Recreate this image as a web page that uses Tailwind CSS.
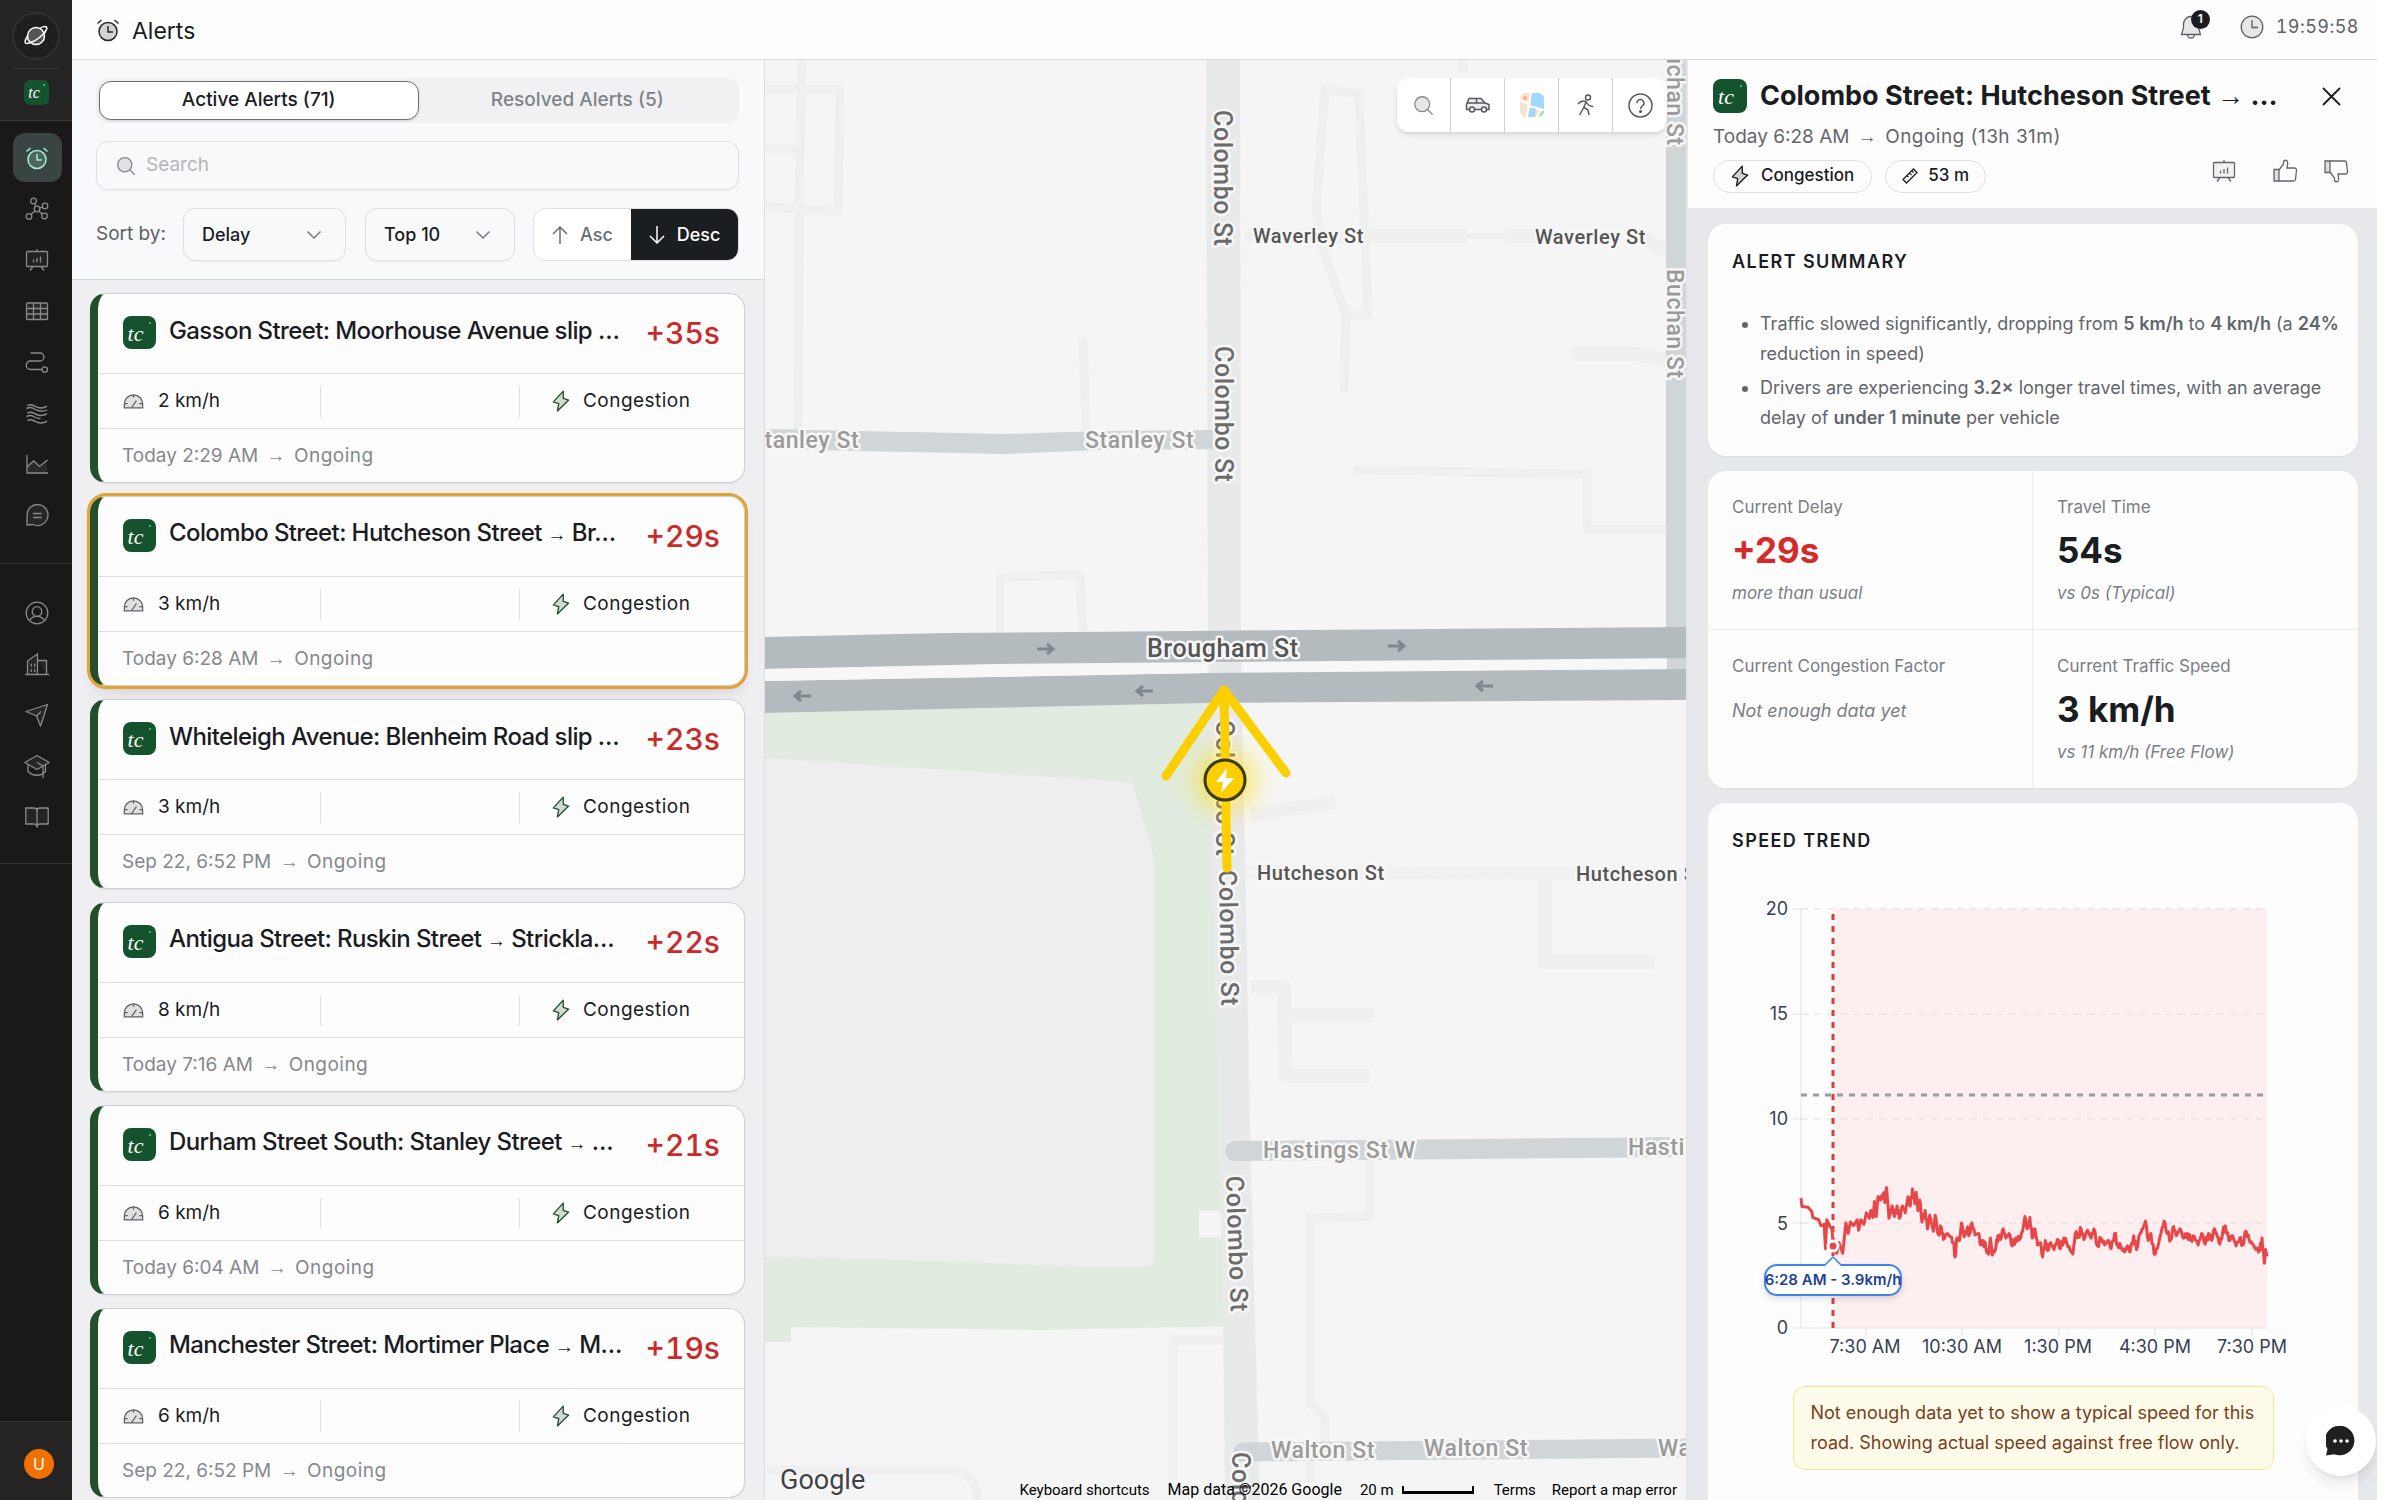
<!DOCTYPE html>
<html lang="en">
<head>
<meta charset="utf-8">
<title>Alerts</title>
<script src="https://cdn.jsdelivr.net/npm/@tailwindcss/browser@4"></script>
</head>
<body class="h-screen overflow-hidden bg-white pr-[23px] font-['Inter',sans-serif] text-[19px] text-[#1a1c1f]">

<!-- shared icon symbols -->
<svg class="hidden" aria-hidden="true">
  <symbol id="i-alarm" viewBox="0 0 24 24"><circle cx="12" cy="13.5" r="9" fill="currentColor" fill-opacity=".2"/><path d="M12 8v6h5M1.5 5.5 5.5 2M22.5 5.5 18.500 2"/></symbol>
  <symbol id="i-board" viewBox="0 0 24 24"><rect x="1.500" y="3.500" width="21" height="15" rx="1" fill="currentColor" fill-opacity=".08"/><path d="M12 3.500V1M8 18.500l-3 4M16 18.500l3 4M8.500 14.500v-3M12 14.500V10M15.500 14.500v-6"/></symbol>
  <symbol id="i-gauge" viewBox="0 0 24 18"><path d="M1 16.500V12a11 11 0 0 1 22 0v4.500z" fill="currentColor" fill-opacity=".18"/><path d="M9.500 16.500l6-8.500M12 1v3.500M1.500 11.500H5M19 11.500h3.500"/></symbol>
  <symbol id="i-bolt" viewBox="0 0 20 24"><path d="M12.500 1 1.500 13l6 2-1.500 8L18.500 11l-6-2z" fill="currentColor" fill-opacity=".2" stroke-linejoin="round"/></symbol>
  <symbol id="i-search" viewBox="0 0 24 24"><circle cx="10.500" cy="10.500" r="8.500" fill="currentColor" fill-opacity=".2"/><path d="M16.500 16.500 22.500 22.500"/></symbol>
  <symbol id="i-chev" viewBox="0 0 16 10"><path d="M1.500 1.500 8 8l6.500-6.500"/></symbol>
  <symbol id="i-thumb" viewBox="0 0 26 24"><path d="M2 10.500h5V22H2z" fill="currentColor" fill-opacity=".2"/><path d="M7 11l4.500-6V3.500a2 2 0 0 1 4-.5c.5 2 0 4-.5 6h7.500a2 2 0 0 1 2 2.200l-1 9A2 2 0 0 1 21.500 22H7"/></symbol>
</svg>

<div class="flex h-full">

  <!-- sidebar -->
  <nav aria-label="Main" class="flex w-[72px] shrink-0 flex-col bg-[#191919] text-[#8a8a8a]">
    <div class="flex h-[121px] flex-col items-center border-b border-[#383838] bg-[#242424] pt-3">
      <a href="#" aria-label="Home" class="flex size-12 items-center justify-center rounded-full border-2 border-[#303030] bg-[#1f1f1f] text-white">
        <svg class="size-6" viewBox="0 0 24 24" fill="none" stroke="currentColor" stroke-width="1.500"><circle cx="12" cy="12" r="8.500" fill="#555"/><path d="M4 11.500C1.500 15 .5 17.500 1.500 19c2 1.500 9-1.500 14-5.500s8-8.500 7-10.500c-1-1-4-.5-6.500 1.500"/></svg>
      </a>
      <div class="mt-2 h-px w-11 bg-[#383838]"></div>
      <a href="#" aria-label="Workspace" class="relative mt-[11px] flex size-[25px] items-center justify-center rounded-md bg-[#14532d] pr-1 font-['Liberation_Serif',serif] text-[16px] leading-none text-white italic">tc<span class="absolute top-1 right-1 size-[2px] rounded-full bg-[#4ade80]"></span></a>
    </div>

    <div class="flex flex-col items-center gap-[2px] border-b border-[#333] pt-3 pb-6 pl-[2px]">
      <a href="#" aria-label="Alerts" class="flex size-[49px] items-center justify-center rounded-xl bg-[#3a4543] text-[#a3ecd2]"><svg class="size-6" fill="none" stroke="currentColor" stroke-width="1.500"><use href="#i-alarm"/></svg></a>
      <a href="#" aria-label="Network" class="flex size-[49px] items-center justify-center"><svg class="size-6" viewBox="0 0 24 24" fill="none" stroke="currentColor" stroke-width="1.300"><circle cx="8.500" cy="4" r="2.800"/><circle cx="20" cy="9" r="2.800"/><circle cx="19.500" cy="19" r="2.800"/><circle cx="4" cy="19.500" r="2.800"/><circle cx="12" cy="12" r="2.800"/><path d="M9.500 6.500 11 9.500M14.700 11.200l2.600-1M14 14l3.400 3.200M10 14l-4 3.500"/></svg></a>
      <a href="#" aria-label="Reports" class="flex size-[49px] items-center justify-center"><svg class="size-6" fill="none" stroke="currentColor" stroke-width="1.300"><use href="#i-board"/></svg></a>
      <a href="#" aria-label="Table" class="flex size-[49px] items-center justify-center"><svg class="size-6" viewBox="0 0 24 24" fill="none" stroke="currentColor" stroke-width="1.300"><rect x="1.500" y="4" width="21" height="16.500" rx="1" fill="currentColor" fill-opacity=".12"/><path d="M1.500 9.500h21M1.500 15h21M8.500 4v16.500M15.500 4v16.500"/></svg></a>
      <a href="#" aria-label="Routes" class="flex size-[49px] items-center justify-center"><svg class="size-6" viewBox="0 0 24 24" fill="none" stroke="currentColor" stroke-width="1.300"><path d="M5.500 3H15a4 4 0 0 1 0 8H5.500a4.200 4.200 0 0 0 0 8.500H17"/><circle cx="19.800" cy="19.500" r="2.700"/></svg></a>
      <a href="#" aria-label="Flows" class="flex size-[49px] items-center justify-center"><svg class="size-6" viewBox="0 0 24 24" fill="none" stroke="currentColor" stroke-width="1.400"><path d="M2.500 4.500c2-1 4-1 6 0s4 2.500 7 2.500 5-.500 6.500-2M1.500 7.500c2-1 5-1.500 7 0s4 2.500 7 2.500 5 0 6.500-1M2.500 12c2-1 4-1 6 0s4 2.500 7 2.500 5-.500 6.500-2M1.500 15.500c2-1 5-1.500 7 0s4 2 7 2M2.500 19.500c2-1 4-1 6 0s4 2.500 7 2.500 5-.500 6.500-2"/></svg></a>
      <a href="#" aria-label="Analytics" class="flex size-[49px] items-center justify-center"><svg class="size-6" viewBox="0 0 24 24" fill="none" stroke="currentColor" stroke-width="1.300"><path d="M2 15 9 8l6 6 7-6.500V21H2z" fill="currentColor" fill-opacity=".15" stroke="none"/><path d="M2 3v18h21M2 15 8.500 9l6 5.500L22.500 8"/></svg></a>
      <a href="#" aria-label="Messages" class="flex size-[49px] items-center justify-center"><svg class="size-6" viewBox="0 0 24 24" fill="none" stroke="currentColor" stroke-width="1.300"><path d="M2 22v-9.500a10.500 10.500 0 1 1 6 9L2 22z" fill="currentColor" fill-opacity=".12"/><path d="M8 10.500h8.500M8 14.500h8.500"/></svg></a>
    </div>

    <div class="flex flex-col items-center gap-[2px] border-b border-[#333] pt-6 pb-[22px] pl-[2px]">
      <a href="#" aria-label="Account" class="flex size-[49px] items-center justify-center"><svg class="size-6" viewBox="0 0 24 24" fill="none" stroke="currentColor" stroke-width="1.300"><circle cx="12" cy="12" r="10.800"/><circle cx="12" cy="10.500" r="4.800"/><path d="M4.500 19.500c3.500-5.500 11.500-5.500 15 0"/></svg></a>
      <a href="#" aria-label="Organisation" class="flex size-[49px] items-center justify-center"><svg class="size-6" viewBox="0 0 24 24" fill="none" stroke="currentColor" stroke-width="1.300"><path d="M0 22.500h24M2.500 22.500V9L12.500 2v20.500M12.500 8.500h9v14" fill="currentColor" fill-opacity=".12"/><path d="M6.300 11.500v3M9.700 11.500v3M6.300 17v3M9.700 17v3"/></svg></a>
      <a href="#" aria-label="Send" class="flex size-[49px] items-center justify-center"><svg class="size-6" viewBox="0 0 24 24" fill="none" stroke="currentColor" stroke-width="1.300" stroke-linejoin="round"><path d="M22.500 1.500 1 8.500 11.500 13l4 10z" fill="currentColor" fill-opacity=".12"/><path d="M11.500 13 16 8.500"/></svg></a>
      <a href="#" aria-label="Learn" class="flex size-[49px] items-center justify-center"><svg class="h-6 w-[26px]" viewBox="0 0 26 24" fill="none" stroke="currentColor" stroke-width="1.300" stroke-linejoin="round"><path d="M13 1.500 .8 8.500 13 15.500l12.200-7z" fill="currentColor" fill-opacity=".12"/><path d="M4 11v6.500c5 5 13 5 17.500 0V11M13 8.500l6 3.500v12"/></svg></a>
      <a href="#" aria-label="Docs" class="flex size-[49px] items-center justify-center"><svg class="size-6" viewBox="0 0 24 24" fill="none" stroke="currentColor" stroke-width="1.300" stroke-linejoin="round"><path d="M12 5.500C12 4 10.500 3 9 3H.8v16H9c1.500 0 3 1 3 3 0-2 1.500-3 3-3h8.200V3H15c-1.500 0-3 1-3 2.500z" fill="currentColor" fill-opacity=".1"/><path d="M12 5v17"/></svg></a>
    </div>

    <div class="mt-auto flex h-[79px] items-center justify-center border-t border-[#383838] bg-[#242424] pt-1.5 pl-1.5">
      <button type="button" aria-label="Account menu" class="size-[30px] rounded-full bg-[#f07000] text-[16px] leading-none text-white">U</button>
    </div>
  </nav>

  <div class="flex min-w-0 flex-1 flex-col">

    <!-- top bar -->
    <header class="flex h-[60px] shrink-0 items-center border-b border-[#dadada] bg-[#fefefe] pr-[18px] pl-6">
      <svg class="size-6" fill="none" stroke="#2a2a2a" stroke-width="1.500" color="#2a2a2a"><use href="#i-alarm"/></svg>
      <h1 class="ml-3 pt-0.5 text-[23px] leading-8">Alerts</h1>
      <div class="ml-auto flex items-center pb-1.5 text-[#5c6066]">
        <button type="button" aria-label="Notifications" class="relative mr-[38px]">
          <svg class="h-6 w-[22px]" viewBox="0 0 22 24" fill="none" stroke="currentColor" stroke-width="1.300"><path d="M3.500 13V9a7.500 7.500 0 0 1 15 0v4l2 6.500H1.500z" fill="currentColor" fill-opacity=".15"/><path d="M7.500 19.500a3.500 3.500 0 0 0 7 0"/></svg>
          <span class="absolute -top-[5px] left-[11px] flex size-[19px] items-center justify-center rounded-full bg-[#1a1c1f] text-[12px] font-semibold text-white">1</span>
        </button>
        <svg class="size-6" viewBox="0 0 24 24" fill="none" stroke="currentColor" stroke-width="1.300"><circle cx="12" cy="12" r="10.800" fill="currentColor" fill-opacity=".15"/><path d="M12 5v7.500h6"/></svg>
        <time class="ml-[12px] text-[18px] leading-6 tracking-wide tabular-nums">19:59:58</time>
      </div>
    </header>

    <div class="flex min-h-0 flex-1">

      <!-- alert list -->
      <section aria-label="Alerts" class="flex w-[693px] shrink-0 flex-col border-r border-[#dcdde0] bg-[#efeff1]">
        <div class="flex flex-col gap-[18px] border-b border-[#d6d7da] bg-[#f8f9fb] py-[18px] pr-[25px] pl-6">
          <div class="flex h-[45px] rounded-xl bg-[#f1f1f3] p-[3px] text-[19px] font-medium">
            <button type="button" class="flex-1 rounded-xl border border-[#6c6f74] bg-white shadow-sm">Active Alerts (71)</button>
            <button type="button" class="flex-1 text-[#7f838a]">Resolved Alerts (5)</button>
          </div>
          <label class="flex h-[49px] items-center gap-2.5 rounded-xl border border-[#dedfe3] pl-[19px] shadow-xs">
            <svg class="size-5 text-[#85888d]" fill="none" stroke="currentColor" stroke-width="1.500"><use href="#i-search"/></svg>
            <input type="search" aria-label="Search alerts" placeholder="Search" class="min-w-0 flex-1 bg-transparent outline-none placeholder:text-[#b4b6ba]">
          </label>
          <div class="flex h-[53px] items-center">
            <label for="sort" class="w-[87px] text-[#5c6066]">Sort by:</label>
            <div class="relative mr-[19px] h-full">
              <select id="sort" class="h-full w-[163px] appearance-none rounded-xl border border-[#dedfe3] bg-transparent pl-[18px] text-[18px] font-medium shadow-xs"><option>Delay</option></select>
              <svg class="pointer-events-none absolute top-[22px] right-6 h-[10px] w-4 text-[#77797d]" fill="none" stroke="currentColor" stroke-width="1.500"><use href="#i-chev"/></svg>
            </div>
            <div class="relative h-full">
              <select aria-label="Limit" class="h-full w-[150px] appearance-none rounded-xl border border-[#dedfe3] bg-transparent pl-[18px] text-[18px] font-medium shadow-xs"><option>Top 10</option></select>
              <svg class="pointer-events-none absolute top-[22px] right-6 h-[10px] w-4 text-[#77797d]" fill="none" stroke="currentColor" stroke-width="1.500"><use href="#i-chev"/></svg>
            </div>
            <div class="ml-auto flex h-full w-[206px] overflow-hidden rounded-xl border border-[#dedfe3] bg-white text-[18px] font-medium">
              <button type="button" class="flex w-[97px] items-center justify-center gap-3 text-[#6a6e74]"><svg class="h-5 w-4" viewBox="0 0 16 20" fill="none" stroke="currentColor" stroke-width="1.500"><path d="M8 19V2M1 9l7-7 7 7"/></svg>Asc</button>
              <button type="button" class="flex flex-1 items-center justify-center gap-3 bg-[#1b1e21] text-white"><svg class="h-5 w-4" viewBox="0 0 16 20" fill="none" stroke="currentColor" stroke-width="1.500"><path d="M8 1v17M1 11l7 7 7-7"/></svg>Desc</button>
            </div>
          </div>
        </div>

        <ul id="alerts" class="flex flex-col gap-[13px] overflow-hidden pt-[13px] pr-[19px] pl-[18px]"></ul>
      </section>

      <!-- map -->
      <main class="relative min-w-0 flex-1 overflow-hidden bg-[#f5f5f5]">
        <svg class="absolute inset-0 h-full w-full" viewBox="765 60 921 1440" preserveAspectRatio="xMidYMid slice" fill="none" role="img" aria-label="Street map">
          <g stroke="#efefef" stroke-width="9" stroke-linejoin="round">
            <path d="M765 89h75l-2 122-73-4M765 149h35M802 60l-3 152-1 220M1083 338l3 92M1000 635v-58l80-2 3 60"/>
            <path d="M1325 90l34 3 9 222h-22l-26-75-4-30zM1346 315l-2 78M1463 60v12"/>
            <path d="M1353 470l234 4v55h79M1370 1160v56l-60 2v184l15 16v24M1310 1462v20M1223 1340h-50v140M765 1470h185q25 0 28 30"/>
            <path d="M1245 236h222M1506 236h30M1640 236l28 16M1572 354h64l32 6M1251 815l84-13M1545 874v88h110M1251 987h33l1 89h85M1284 1015h90" stroke-width="14"/>
            <path d="M1467 236h40" stroke-width="5"/>
            <path d="M1245 872l441 2" stroke="#f1f1f1" stroke-width="13"/>
          </g>
          <path d="M765 713 1208 702 1240 1326 1042 1330 791 1327v15h-26z" fill="#e1ebe0"/>
          <path d="M765 758 L810 761 1132 782 1150 843 1154 860V1258q0 9-9 9h-61l-144-6-175-4z" fill="#eeeeee"/>
          <path d="M1199 1211h24v26h-24z" fill="#f5f5f5"/>
          <path d="M1206 60h34l1 580 2 120 4 200 2 120 4 170 5 180 2 70h-35l-2-200-6-220-4-180-5-260z" fill="#e8e9e9"/>
          <g fill="#d0d5d7">
            <path d="M1666 60h20v620h-20zM765 429l95 2 145 3 95-3 113-1v19l-113 1-95 4-145-3-95-2z"/>
            <path d="M1235 1151l451-4" stroke="#d0d5d7" stroke-width="20" stroke-linecap="round"/>
            <path d="M1243 1452l443-4" stroke="#d0d5d7" stroke-width="19" stroke-linecap="round"/>
          </g>
          <path d="M765 637l180-4 741-6v31l-690 6-231 5zM765 681l441-8 480-4v31l-480 3-441 10z" fill="#b4bbbf"/>
          <path d="M765 669l231-4 211-2v10l-442 8zM1242 663l425-4v10l-425 3z" fill="#f7f7f7"/>
          <g stroke="#7e898f" stroke-width="3">
            <path d="M1037 649h16M1047 644l6 5-6 5M1388 646h16M1398 641l6 5-6 5M811 696h-16M801 691l-6 5 6 5M1153 691h-16M1143 686l-6 5 6 5M1493 686h-16M1483 681l-6 5 6 5"/>
          </g>
          <g class="font-['Roboto',sans-serif] text-[23px] font-medium tracking-wide [paint-order:stroke]" stroke="#f7f7f7" stroke-width="5" stroke-linejoin="round" fill="#6b6b6b">
            <g class="text-[25px]">
              <text transform="translate(1214 110) rotate(90)">Colombo St</text>
              <text transform="translate(1215 346) rotate(90)">Colombo St</text>
              <text transform="translate(1216 720) rotate(90)">Colombo St</text>
              <text transform="translate(1219 870) rotate(89)">Colombo St</text>
              <text transform="translate(1226 1176) rotate(88)">Colombo St</text>
              <text transform="translate(1232 1452) rotate(90)">Colombo St</text>
            </g>
            <g fill="#9a9a9a">
              <text transform="translate(1667 36) rotate(90)">Buchan St</text>
              <text transform="translate(1667 269) rotate(90)">Buchan St</text>
              <text x="750" y="448">Stanley St</text><text x="1085" y="448">Stanley St</text>
              <text x="1263" y="1158">Hastings St W</text><text x="1628" y="1155">Hastings St W</text>
              <text x="1271" y="1458">Walton St</text><text x="1424" y="1456">Walton St</text><text x="1658" y="1456">Walton St</text>
            </g>
            <g fill="#555">
              <text x="1147" y="657" class="text-[25px]">Brougham St</text>
              <g class="text-[20px]"><text x="1253" y="243">Waverley St</text><text x="1535" y="244">Waverley St</text>
              <text x="1257" y="880">Hutcheson St</text><text x="1576" y="881">Hutcheson St</text></g>
            </g>
          </g>
          <!-- alert marker -->
          <g stroke="#fccf03" stroke-width="9" stroke-linecap="round" stroke-linejoin="round"><path d="M1227 868 1224 690M1166 776l58-86 62 83"/></g>
          <circle cx="1225" cy="780" r="32" fill="#ffdd00" class="blur-md" opacity=".5"/>
          <circle cx="1225" cy="780" r="20" fill="#fccf03" stroke="#3f3a12" stroke-width="3"/>
          <path d="M1227 768l-11 14h7l-2 11 13-15h-8z" fill="#fff"/>
        </svg>

        <div class="absolute top-[18px] right-[19px] flex h-[54px] divide-x divide-[#cfd0d2] rounded-xl bg-white text-[#55595f] shadow-md">
          <button type="button" aria-label="Search map" class="flex w-[54px] items-center justify-center"><svg class="size-[21px] text-[#85888d]" fill="none" stroke="currentColor" stroke-width="1.500"><use href="#i-search"/></svg></button>
          <button type="button" aria-label="Traffic" class="flex w-[54px] items-center justify-center"><svg class="h-4 w-[26px]" viewBox="0 0 26 16" fill="none" stroke="currentColor" stroke-width="1.500"><path d="M4 12.500H1.500V7.500L4 1.500h12l4 4.500 4 1.500v5h-2M10 12.500h6M1.500 6H20M11.500 1.500V6" fill="currentColor" fill-opacity=".1"/><circle cx="7" cy="12.500" r="2.500" fill="#fff"/><circle cx="19" cy="12.500" r="2.500" fill="#fff"/></svg></button>
          <button type="button" aria-label="Map style" class="flex w-[54px] items-center justify-center"><svg class="size-6 rounded-md" viewBox="0 0 24 24"><path d="M0 0h24v24H0z" fill="#f6e3d0"/><path d="M11 0h13v17l-9-3-4 3-1 7H8l3-12z" fill="#a0d8fb"/><path d="M10 15h6l-1 9H8z" fill="#a0d8fb"/><path d="M17 24l4-7 3 1v6z" fill="#a6e3b1"/><path d="M0 7l9 4M7 24l4-24M9 13l15 4M17 24l4-7" stroke="#fff" stroke-width="2"/><circle cx="5" cy="5" r="2" fill="#f6a9a0"/></svg></button>
          <button type="button" aria-label="Street view" class="flex w-[54px] items-center justify-center"><svg class="size-[22px]" viewBox="0 0 22 22" fill="none" stroke="currentColor" stroke-width="1.500"><circle cx="13" cy="3.500" r="2.500"/><path d="M3 10c2-2.500 5-3.500 8-2.500 2 4 4 5 7 5M11 8l-2.500 6-4 7M9 13.500l4 2.500 1 5"/></svg></button>
          <button type="button" aria-label="Help" class="flex w-[54px] items-center justify-center"><svg class="size-[25px]" viewBox="0 0 25 25" fill="none" stroke="currentColor" stroke-width="1.500"><circle cx="12.500" cy="12.500" r="11.500"/><path d="M9 10a3.500 3.500 0 1 1 5.500 2.800c-1.400.9-2 1.500-2 3.200"/><circle cx="12.500" cy="18.500" r=".8" fill="currentColor"/></svg></button>
        </div>

        <div class="absolute inset-x-0 bottom-0 flex items-center pr-[9px] pl-[15px] font-['Roboto',sans-serif] text-[15px] leading-5 whitespace-nowrap text-black">
          <span class="-mt-5 text-[27px] text-[#3f4347] [text-shadow:0_0_3px_white]">Google</span>
          <button type="button" class="ml-auto">Keyboard shortcuts</button>
          <span class="ml-[18px] text-[16px]">Map data ©2026 Google</span>
          <span class="ml-[18px]">20 m</span>
          <span class="ml-2 h-2 w-[72px] border-x-2 border-b-3 border-black"></span>
          <a href="#" class="ml-5">Terms</a>
          <a href="#" class="ml-4">Report a map error</a>
        </div>
      </main>

      <!-- alert detail -->
      <aside class="flex w-[691px] shrink-0 flex-col border-l-2 border-[#e3e5e8] bg-[#e6e8eb]">
        <div class="shrink-0 bg-[#fdfdfd] pt-[19px] pr-[26px] pb-[15px] pl-[25px]">
          <div class="flex h-[34px] items-center">
            <span class="relative mr-[13px] flex size-[34px] shrink-0 items-center justify-center rounded-lg bg-[#14532d] pt-0.5 pr-2 font-['Liberation_Serif',serif] text-[22px] leading-none text-white italic">tc<span class="absolute top-[6px] right-[5px] size-[2px] rounded-full bg-[#4ade80]"></span></span>
            <h2 class="text-[27px] leading-8 font-bold whitespace-nowrap">Colombo Street: Hutcheson Street <span class="font-['Liberation_Sans',sans-serif] font-normal">→</span> …</h2>
            <button type="button" aria-label="Close" class="mr-2.5 ml-auto"><svg class="size-[19px]" viewBox="0 0 19 19" fill="none" stroke="currentColor" stroke-width="1.800"><path d="M1 1l17 17M18 1 1 18"/></svg></button>
          </div>
          <p class="mt-[10px] leading-7 text-[#62666c]">Today 6:28 AM <span class="mx-[3px] font-['Liberation_Sans',sans-serif]">→</span> <span class="tracking-wide">Ongoing (13h 31m)</span></p>
          <div class="mt-2 flex items-center gap-[13px] text-[17px] font-medium">
            <span class="flex h-[33px] items-center gap-3 rounded-full border border-[#dedfe3] px-[17px]"><svg class="h-[22px] w-[18px]" fill="none" stroke="currentColor" stroke-width="1.500"><use href="#i-bolt"/></svg>Congestion</span>
            <span class="flex h-[33px] items-center gap-2.5 rounded-full border border-[#dedfe3] px-4"><svg class="size-4" viewBox="0 0 16 16" fill="none" stroke="currentColor" stroke-width="1.300"><path d="M1 11.500 11.500 1 15 4.500 4.500 15zM5 7.500l1.500 1.500M7.500 5l2 2M10 3l1.500 1.500"/></svg>53 m</span>
            <div class="ml-auto flex items-center pr-0.5 pb-2.5 text-[#62666c]">
              <button type="button" aria-label="Report" class="mr-9"><svg class="size-6" fill="none" stroke="currentColor" stroke-width="1.300"><use href="#i-board"/></svg></button>
              <button type="button" aria-label="Helpful" class="mr-[25px]"><svg class="h-6 w-[26px]" fill="none" stroke="currentColor" stroke-width="1.300"><use href="#i-thumb"/></svg></button>
              <button type="button" aria-label="Not helpful"><svg class="h-6 w-[26px] -scale-y-100" fill="none" stroke="currentColor" stroke-width="1.300"><use href="#i-thumb"/></svg></button>
            </div>
          </div>
        </div>

        <div class="flex min-h-0 flex-1 flex-col gap-[15px] overflow-hidden pt-4 pr-[19px] pl-5">
          <section class="rounded-[18px] bg-[#fdfdfd] pt-6 pr-4 pb-[23px] pl-6 shadow-xs">
            <h3 class="text-[18px] leading-7 font-semibold tracking-[0.08em]">ALERT SUMMARY</h3>
            <ul class="mt-[33px] list-disc space-y-1 pl-[28px] text-[18px] leading-[30px] text-[#62666c]">
              <li>Traffic slowed significantly, dropping from <strong class="font-semibold">5 km/h</strong> to <strong class="font-semibold">4 km/h</strong> (a <strong class="font-semibold">24%</strong> reduction in speed)</li>
              <li>Drivers are experiencing <strong class="font-semibold">3.2×</strong> longer travel times, with an average delay of <strong class="font-semibold">under 1 minute</strong> per vehicle</li>
            </ul>
          </section>

          <section class="grid grid-cols-2 rounded-[18px] bg-[#fdfdfd] text-[17px] leading-6 text-[#7a7e84] shadow-xs">
            <div class="border-r border-b border-[#ededf0] px-6 py-6">
              <p>Current Delay</p>
              <p class="my-2 text-[35px] leading-[46px] font-bold text-[#d42a2a]">+29s</p>
              <p class="italic">more than usual</p>
            </div>
            <div class="border-b border-[#ededf0] px-6 py-6">
              <p>Travel Time</p>
              <p class="my-2 text-[35px] leading-[46px] font-bold text-[#1a1c1f]">54s</p>
              <p class="italic">vs 0s (Typical)</p>
            </div>
            <div class="border-r border-[#ededf0] px-6 py-6">
              <p>Current Congestion Factor</p>
              <p class="mt-[21px] text-[18px] italic">Not enough data yet</p>
            </div>
            <div class="px-6 py-6">
              <p>Current Traffic Speed</p>
              <p class="my-2 text-[35px] leading-[46px] font-bold text-[#1a1c1f]">3 km/h</p>
              <p class="italic">vs 11 km/h (Free Flow)</p>
            </div>
          </section>

          <section class="flex-1 rounded-t-[18px] bg-[#fdfdfd] px-6 pt-6">
            <h3 class="text-[18px] leading-7 font-semibold tracking-[0.08em]">SPEED TREND</h3>
            <svg class="mt-9 w-full" viewBox="1732 890 602 480" fill="none" role="img" aria-label="Speed over the last 14 hours">
              <rect x="1833" y="908" width="434" height="419" fill="#fdeeef"/>
              <path d="M1801 908h466M1801 1013h466M1801 1118h466M1801 1222h466" stroke="#e2dcde" stroke-dasharray="7 6"/>
              <path d="M1793 908h8v419h466M1793 1013h8M1793 1118h8M1793 1222h8M1793 1327h8M1866 1327v8M1962 1327v8M2059 1327v8M2155 1327v8M2252 1327v8" stroke="#dfe2e6"/>
              <path d="M1801 1094h466" stroke="#9a9ca0" stroke-width="3" stroke-dasharray="6 6"/>
              <path d="M1833 1327V908" stroke="#dc3c40" stroke-width="3" stroke-dasharray="6 6"/>
              <g class="text-[18px]" fill="#374151">
                <g text-anchor="end"><text x="1788" y="914">20</text><text x="1788" y="1019">15</text><text x="1788" y="1124">10</text><text x="1788" y="1229">5</text><text x="1788" y="1333">0</text></g>
                <g text-anchor="middle"><text x="1865" y="1352">7:30 AM</text><text x="1962" y="1352">10:30 AM</text><text x="2058" y="1352">1:30 PM</text><text x="2155" y="1352">4:30 PM</text><text x="2252" y="1352">7:30 PM</text></g>
              </g>
              <path id="speed" stroke="#e8474a" stroke-width="3" stroke-linejoin="round"/>
              <circle cx="1833" cy="1245" r="5" fill="#e8474a" stroke="#fff" stroke-width="3"/>
              <rect x="1765" y="1264" width="136" height="30" rx="12" fill="#fff" stroke="#4285e8" stroke-width="2" class="drop-shadow-md"/>
              <path d="M1824 1265l9-9 9 9" fill="#fff" stroke="#4285e8" stroke-width="1.500"/>
              <text x="1833" y="1284" text-anchor="middle" class="text-[15px] font-semibold" fill="#21409a">6:28 AM - 3.9km/h</text>
            </svg>
            <p class="mx-auto mt-[15px] w-[481px] rounded-xl border border-[#f3e58c] bg-[#fffbeb] py-[11px] pr-3 pl-[17px] text-[18px] leading-[30px] text-[#78401c]">Not enough data yet to show a typical speed for this road. Showing actual speed against free flow only.</p>
          </section>
        </div>
      </aside>
    </div>
  </div>
</div>

<button type="button" aria-label="Open chat" class="fixed right-6 bottom-6 flex size-[70px] items-center justify-center rounded-full bg-white shadow-lg">
  <svg class="size-[30px]" viewBox="0 0 30 30"><path d="M0 29.500l1.500-6.500A14.800 14.800 0 1 1 8 28.200z" fill="#1f1f1d"/><g fill="#fff"><circle cx="9" cy="15" r="1.800"/><circle cx="15" cy="15" r="1.800"/><circle cx="21" cy="15" r="1.800"/></g></svg>
</button>

<script>
  const alerts = [
    ["Gasson Street: Moorhouse Avenue slip …", "+35s", "2 km/h", "Today 2:29 AM"],
    ["Colombo Street: Hutcheson Street → Br…", "+29s", "3 km/h", "Today 6:28 AM", true],
    ["Whiteleigh Avenue: Blenheim Road slip …", "+23s", "3 km/h", "Sep 22, 6:52 PM"],
    ["Antigua Street: Ruskin Street → Strickla…", "+22s", "8 km/h", "Today 7:16 AM"],
    ["Durham Street South: Stanley Street → …", "+21s", "6 km/h", "Today 6:04 AM"],
    ["Manchester Street: Mortimer Place → M…", "+19s", "6 km/h", "Sep 22, 6:52 PM"],
  ];
  document.getElementById("alerts").innerHTML = alerts.map(([title, delay, speed, start, selected]) => `
    <li class="h-[190px] shrink-0 rounded-2xl border border-l-8 border-[#cfd0d4] border-l-[#234f2d] bg-[#fdfdfd] ${selected ? "shadow-lg outline-3 outline-[#e2a336]" : "shadow-xs"}">
      <div class="flex h-[79px] items-center pr-6 pb-0.5 pl-[25px]">
        <span class="relative mr-[13px] flex size-[33px] shrink-0 items-center justify-center rounded-lg bg-[#14532d] pt-0.5 pr-2 font-['Liberation_Serif',serif] text-[22px] leading-none text-white italic">tc<span class="absolute top-[6px] right-[5px] size-[2px] rounded-full bg-[#4ade80]"></span></span>
        <a href="#" class="pb-[3px] text-[24px] leading-8 font-medium whitespace-nowrap tracking-tight">${title.replace("→", '<span class="font-[\'Liberation_Sans\',sans-serif] text-[19px]">→</span>')}</a>
        <span class="ml-auto text-[30px] leading-8 font-medium text-[#c92a2a] tabular-nums">${delay}</span>
      </div>
      <div class="grid h-[56px] grid-cols-[222px_200px_1fr] items-center border-y border-[#dfe0e3]">
        <div class="flex items-center gap-3.5 pl-[25px]"><svg class="h-[15px] w-[21px] text-[#5c6066]" fill="none" stroke="currentColor" stroke-width="1.500"><use href="#i-gauge"/></svg>${speed}</div>
        <div class="h-[31px] border-x border-[#dfe0e3]"></div>
        <div class="flex items-center gap-[13px] pl-[32px] tracking-wide"><svg class="h-[22px] w-[18px] text-[#234f2d]" fill="none" stroke="currentColor" stroke-width="1.500"><use href="#i-bolt"/></svg>Congestion</div>
      </div>
      <p class="pl-6 leading-[53px] text-[#85888d]">${start} <span class="mx-[3px] font-['Liberation_Sans',sans-serif]">→</span> <span class="tracking-wide">Ongoing</span></p>
    </li>`).join("");

  // speed samples: elapsed share of the axis (per 1028), drop from the top gridline (per 913)
  const samples = [0,630,2,648,16,650,24,660,26,672,39,677,44,690,51,687,54,740,57,677,64,692,68,697,72,735,79,750,84,727,92,750,95,722,99,684,104,707,109,682,116,690,124,677,127,700,132,677,139,687,144,662,151,674,154,657,159,672,162,637,166,670,170,627,176,634,182,620,186,637,189,607,194,674,201,647,206,670,212,647,217,674,224,647,230,662,236,627,241,647,246,610,251,642,254,617,258,657,262,634,267,682,274,657,279,697,284,667,292,702,296,667,302,707,310,694,314,720,322,707,330,714,336,727,340,758,344,717,350,722,354,684,360,714,366,697,372,707,377,684,384,710,392,707,396,732,402,722,408,740,414,752,418,717,422,754,430,737,434,712,440,720,446,697,452,717,459,707,466,734,474,717,482,720,489,702,494,670,499,697,505,672,510,717,516,697,522,732,528,727,533,758,539,722,544,744,551,727,558,742,566,720,572,740,580,717,586,727,594,744,600,752,605,707,612,712,618,697,624,720,632,700,640,717,646,697,654,734,662,717,670,732,678,722,684,740,692,707,698,730,706,737,714,747,720,734,726,747,734,712,740,742,748,707,754,697,760,680,766,722,772,707,779,752,786,740,794,707,801,680,808,707,816,720,822,692,828,712,836,697,844,717,852,707,860,722,868,714,876,732,884,707,892,730,899,707,906,722,912,697,918,712,924,730,930,707,936,690,944,722,952,712,960,734,968,717,974,732,982,702,989,722,996,730,1004,742,1012,744,1017,717,1022,772,1025,742,1028,757];
  let d = "";
  for (let i = 0; i < samples.length; i += 2) {
    const x = samples[i], y = samples[i + 1];
    if (i > 60) {
      const px = samples[i - 2], py = samples[i - 1], w = (i * 7) % 17 - 8;
      d += `L${1801 + (px * 2 + x) / 3 * .4533} ${908 + ((py * 2 + y) / 3 + w) * .459}L${1801 + (px + x * 2) / 3 * .4533} ${908 + ((py + y * 2) / 3 - w) * .459}`;
    }
    d += `${i ? "L" : "M"}${1801 + x * .4533} ${908 + y * .459}`;
  }
  document.getElementById("speed").setAttribute("d", d);
</script>
</body>
</html>
